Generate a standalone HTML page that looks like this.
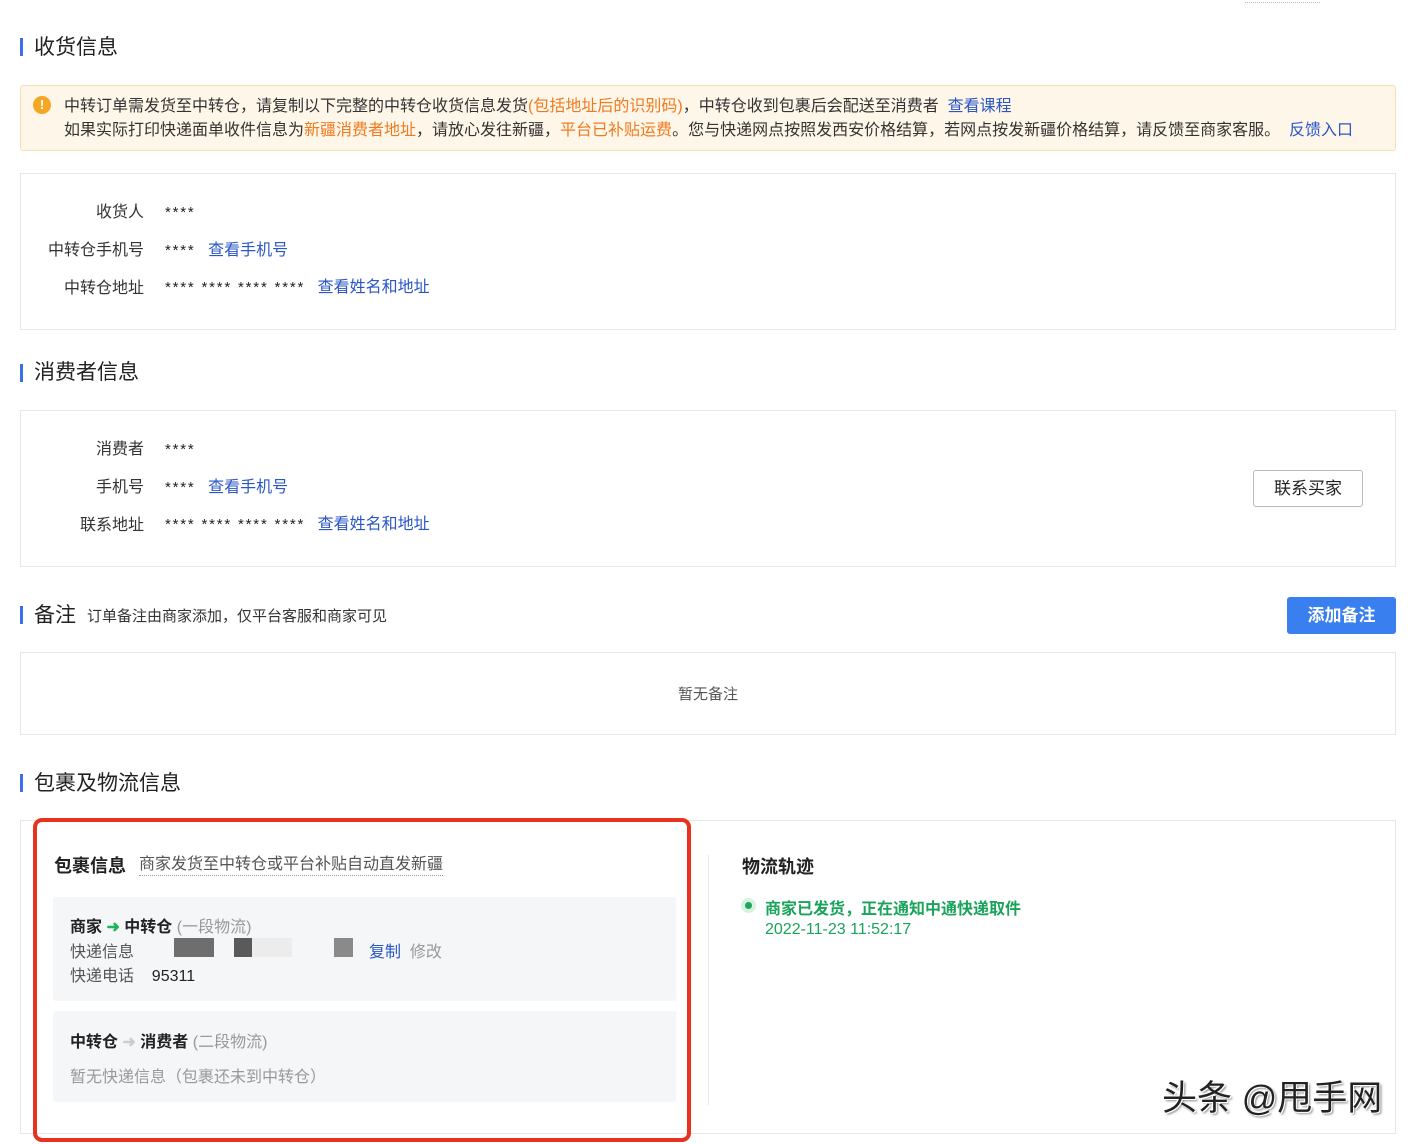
<!DOCTYPE html>
<html><head><meta charset="utf-8"><style>
*{margin:0;padding:0;box-sizing:border-box}
body{width:1420px;height:1144px;background:#fff;position:relative;overflow:hidden;font-family:"Liberation Sans","Noto Sans CJK SC",sans-serif;color:#333;font-size:16px}
.a{position:absolute;white-space:nowrap}
.t{font-size:21px;color:#222;line-height:24px}
.bar{position:absolute;left:20px;width:3px;height:18px;background:#3a6fe8}
.box{position:absolute;left:20px;width:1376px;border:1px solid #e6e6e6}
.lb{position:absolute;width:124px;left:20px;text-align:right;font-size:16px;color:#333;line-height:20px}
.v{position:absolute;left:165px;font-size:15px;line-height:20px;color:#222}
.s{letter-spacing:1.8px;font-size:15px}
.blue{color:#2a56c6}
.org{color:#f07a1e}
.g{color:#999}
</style></head><body>
<div class="a" style="left:1245px;top:2px;width:75px;border-top:1px dotted #bbb"></div>

<div class="bar" style="top:38px"></div><div class="a t" style="left:34px;top:36px">收货信息</div>
<div class="a" style="left:20px;top:85px;width:1376px;height:66px;background:#fef6e9;border:1px solid #f8ddb4;border-radius:3px"></div>
<div class="a" style="left:33px;top:96px;width:18px;height:18px;border-radius:50%;background:#f5a623;color:#fff;font-size:13px;font-weight:bold;text-align:center;line-height:18px">!</div>
<div class="a" style="left:64px;top:96px;font-size:16px;line-height:22px;color:#333">中转订单需发货至中转仓，请复制以下完整的中转仓收货信息发货<span class="org">(包括地址后的识别码)</span>，中转仓收到包裹后会配送至消费者 &nbsp;<span class="blue">查看课程</span></div>
<div class="a" style="left:64px;top:120px;font-size:16px;line-height:22px;color:#333">如果实际打印快递面单收件信息为<span class="org">新疆消费者地址</span>，请放心发往新疆，<span class="org">平台已补贴运费</span>。您与快递网点按照发西安价格结算，若网点按发新疆价格结算，请反馈至商家客服。 &nbsp;<span class="blue">反馈入口</span></div>

<div class="box" style="top:173px;height:157px"></div>
<div class="lb" style="top:203px">收货人</div><div class="v" style="top:203px"><span class="s">****</span></div>
<div class="lb" style="top:241px">中转仓手机号</div><div class="v" style="top:241px"><span class="s">****</span> &nbsp;&nbsp;<span class="blue" style="font-size:16px">查看手机号</span></div>
<div class="lb" style="top:279px">中转仓地址</div><div class="v" style="top:278px"><span class="s">**** **** **** ****</span> &nbsp;&nbsp;<span class="blue" style="font-size:16px">查看姓名和地址</span></div>

<div class="bar" style="top:364px"></div><div class="a t" style="left:34px;top:361px">消费者信息</div>
<div class="box" style="top:410px;height:157px"></div>
<div class="lb" style="top:440px">消费者</div><div class="v" style="top:440px"><span class="s">****</span></div>
<div class="lb" style="top:478px">手机号</div><div class="v" style="top:478px"><span class="s">****</span> &nbsp;&nbsp;<span class="blue" style="font-size:16px">查看手机号</span></div>
<div class="lb" style="top:516px">联系地址</div><div class="v" style="top:515px"><span class="s">**** **** **** ****</span> &nbsp;&nbsp;<span class="blue" style="font-size:16px">查看姓名和地址</span></div>
<div class="a" style="left:1253px;top:470px;width:110px;height:37px;border:1px solid #bbb;border-radius:3px;text-align:center;line-height:35px;font-size:17px;color:#222">联系买家</div>

<div class="bar" style="top:606px"></div><div class="a t" style="left:34px;top:604px">备注</div>
<div class="a" style="left:87px;top:605px;font-size:15px;color:#333">订单备注由商家添加，仅平台客服和商家可见</div>
<div class="a" style="left:1287px;top:597px;width:109px;height:37px;background:#3a7ff0;border-radius:3px;color:#fff;text-align:center;line-height:37px;font-size:17px;font-weight:bold">添加备注</div>
<div class="box" style="top:652px;height:83px"></div>
<div class="a" style="left:0;width:1416px;text-align:center;top:683px;font-size:15px;color:#555">暂无备注</div>

<div class="bar" style="top:774px"></div><div class="a t" style="left:34px;top:772px">包裹及物流信息</div>
<div class="box" style="top:820px;height:314px"></div>

<div class="a" style="left:53px;top:897px;width:623px;height:104px;background:#f5f6f8;border-radius:3px"></div>
<div class="a" style="left:53px;top:1011px;width:623px;height:91px;background:#f5f6f8;border-radius:3px"></div>
<div class="a" style="left:54px;top:852px;font-size:18px;font-weight:bold;color:#222">包裹信息</div>
<div class="a" style="left:139px;top:854px;font-size:16px;color:#555;border-bottom:1px dotted #999;line-height:21px">商家发货至中转仓或平台补贴自动直发新疆</div>
<div class="a" style="left:70px;top:913px;font-size:16px;color:#222;font-weight:bold">商家 <span style="color:#1db35c">➜</span> 中转仓 <span style="font-weight:normal;color:#999">(一段物流)</span></div>
<div class="a" style="left:70px;top:938px;font-size:16px;color:#555">快递信息</div>
<div class="a" style="left:174px;top:938px;width:40px;height:19px;background:#6e6e6e"></div>
<div class="a" style="left:234px;top:938px;width:18px;height:19px;background:#5a5a5a"></div>
<div class="a" style="left:252px;top:938px;width:40px;height:19px;background:#ececec"></div>
<div class="a" style="left:334px;top:938px;width:19px;height:19px;background:#8a8a8a"></div>
<div class="a" style="left:369px;top:938px;font-size:16px"><span class="blue">复制</span> &nbsp;<span class="g">修改</span></div>
<div class="a" style="left:70px;top:962px;font-size:16px;color:#555">快递电话 &nbsp;&nbsp; <span style="color:#222">95311</span></div>
<div class="a" style="left:70px;top:1028px;font-size:16px;color:#222;font-weight:bold">中转仓 <span style="color:#ccc">➜</span> 消费者 <span style="font-weight:normal;color:#999">(二段物流)</span></div>
<div class="a" style="left:70px;top:1063px;font-size:16px;color:#999">暂无快递信息（包裹还未到中转仓）</div>

<div class="a" style="left:33px;top:818px;width:658px;height:324px;border:4px solid #e8321f;border-radius:9px"></div>

<div class="a" style="left:708px;top:855px;width:1px;height:250px;background:#e6e6e6"></div>
<div class="a" style="left:742px;top:853px;font-size:18px;font-weight:bold;color:#222">物流轨迹</div>
<div class="a" style="left:741px;top:898px;width:15px;height:15px;border-radius:50%;background:#d6f2e1"></div>
<div class="a" style="left:745px;top:902px;width:7px;height:7px;border-radius:50%;background:#1aa85a"></div>
<div class="a" style="left:765px;top:895px;font-size:16px;color:#1aa35a;font-weight:bold">商家已发货，正在通知中通快递取件</div>
<div class="a" style="left:765px;top:921px;font-size:16px;color:#1aa35a">2022-11-23 11:52:17</div>

<div class="a" style="left:1162px;top:1070px;font-size:35px;color:#222;text-shadow:1px 1px 0 #fff,-1px -1px 0 #fff,2px 2px 2px #888">头条 @甩手网</div>
</body></html>
